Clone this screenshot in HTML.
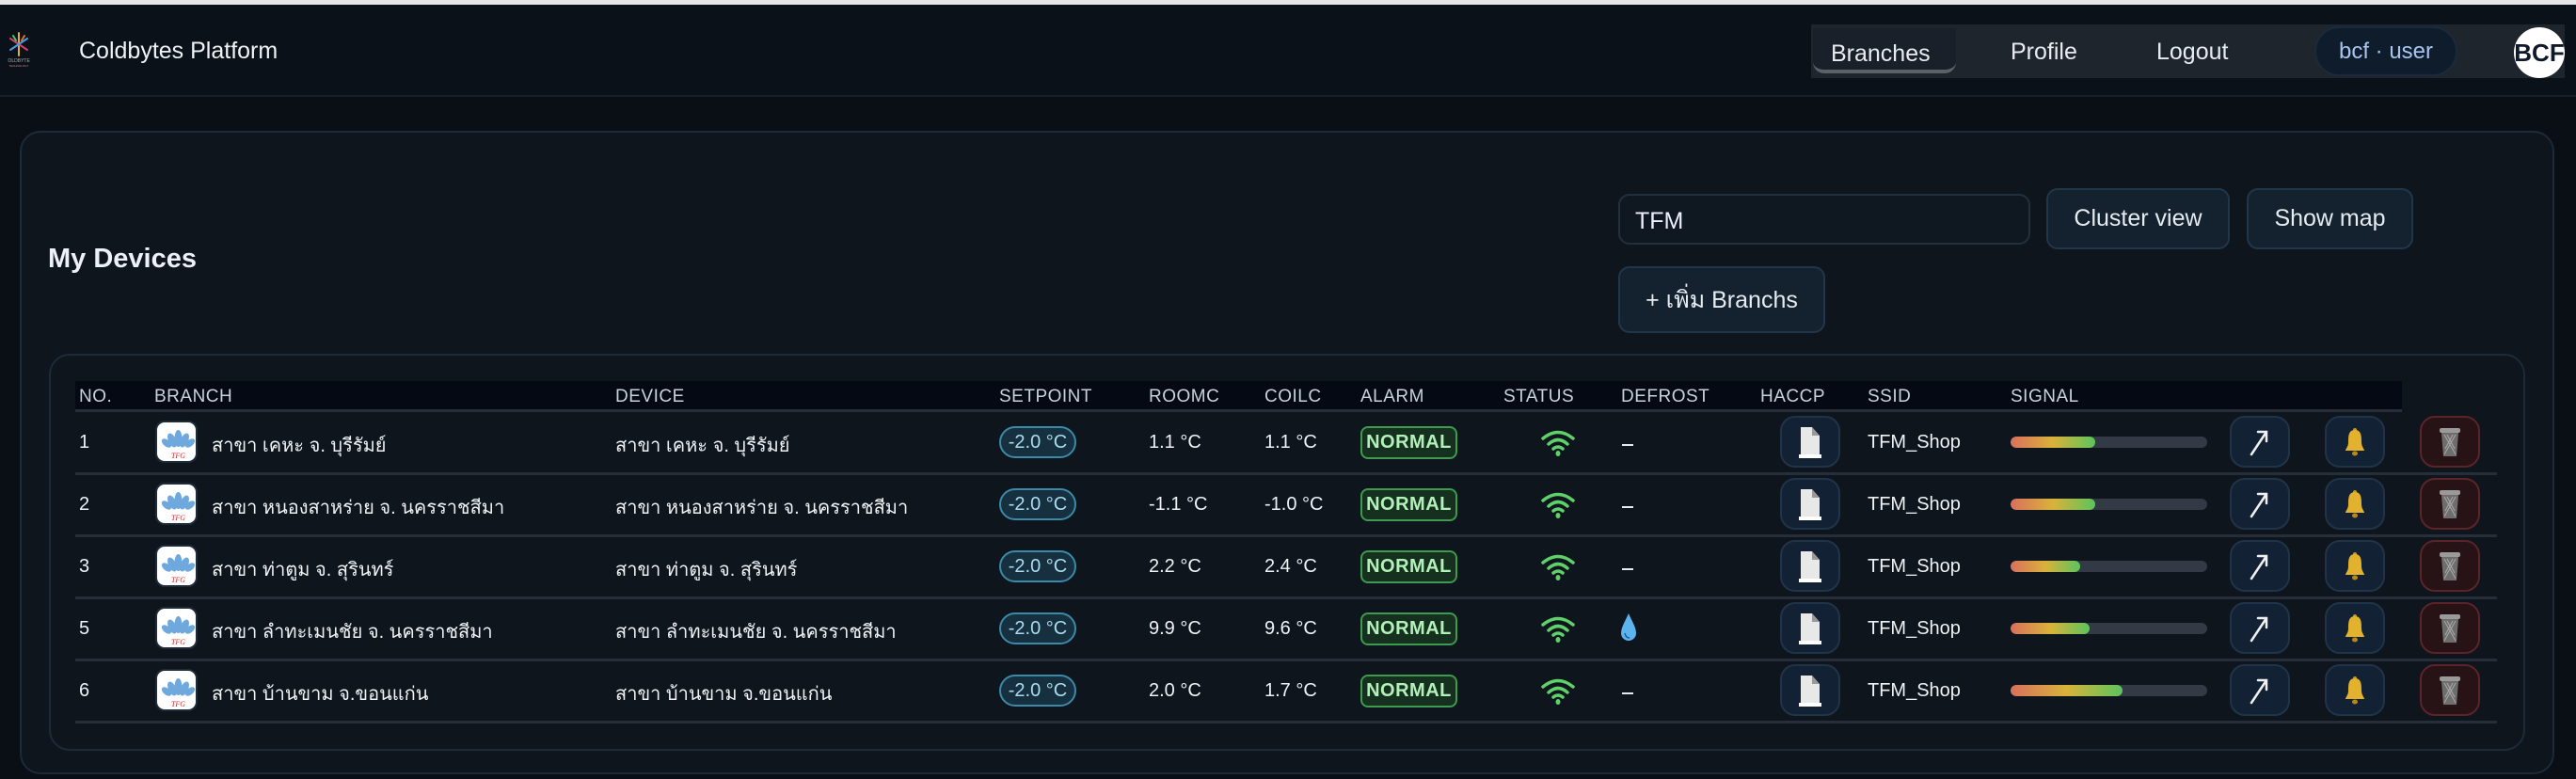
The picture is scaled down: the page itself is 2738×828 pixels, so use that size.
<!DOCTYPE html>
<html><head><meta charset="utf-8">
<style>
*{box-sizing:border-box;margin:0;padding:0}
body{width:2738px;height:828px;background:#0a0f15;font-family:"Liberation Sans","DejaVu Sans",sans-serif;color:#e6ebf0;position:relative;overflow:hidden}
.a{position:absolute}
.top{left:0;top:0;width:2738px;height:5px;background:#e4e6e8}
.nav{left:0;top:5px;width:2738px;height:98px;background:#0b1118;border-bottom:2px solid #17212c}
.ng{left:1925px;top:26px;width:801px;height:57px;background:#1f252d}
.nt{font-size:25px;color:#e8ecf0;top:41px}
.card{left:21px;top:139px;width:2694px;height:684px;border:2px solid #1c2a39;border-radius:22px;background:#0f151c}
.tbl{left:52px;top:376px;width:2632px;height:422px;border:2px solid #1c2a39;border-radius:22px;background:#0f151c}
.btn{background:#14222f;border:2px solid #22364a;border-radius:12px;color:#e6ebf0;font-size:25px;display:flex;align-items:center;justify-content:center}
.hd{left:80px;top:405px;width:2473px;height:31px;background:#040913}
.ht{top:411px;font-size:19px;color:#c9d1db;letter-spacing:.5px}
.line{left:80px;width:2574px;height:3px;background:#262f39}
.t{font-size:20px;color:#eef2f5}
.logo{width:45px;height:45px;border-radius:10px;background:#fff;border:2px solid #1f2b38;overflow:hidden}
.sp{width:82px;height:34px;border:2px solid #3a8aa8;background:#163040;border-radius:17px;color:#a9dcee;font-size:20px;display:flex;align-items:center;justify-content:center}
.nm{width:103px;height:35px;border:2px solid #3e9a4e;background:#16301f;border-radius:8px;color:#b2f2b8;font-size:20px;font-weight:bold;display:flex;align-items:center;justify-content:center;letter-spacing:.5px}
.ib{width:64px;height:55px;border:2px solid #203449;background:#122133;border-radius:16px;display:flex;align-items:center;justify-content:center}
.tr{border-color:#5a2428;background:#271216}
.bar{width:209px;height:12px;border-radius:6px;background:#333a45;overflow:hidden}
.fill{height:12px;border-radius:6px;background:linear-gradient(90deg,#d9705d,#d9b23a 50%,#5cc45c)}
</style></head><body>
<div class="a top"></div>
<div class="a nav"></div>
<svg class="a" style="left:8px;top:33px" width="24" height="40" viewBox="0 0 24 40">
<g stroke-width="2" stroke-linecap="round"><line x1="12" y1="2" x2="12" y2="26" stroke="#e0b030"/><line x1="3" y1="8" x2="21" y2="20" stroke="#d04070"/><line x1="21" y1="8" x2="3" y2="20" stroke="#40a0e0"/><line x1="6" y1="5" x2="9" y2="10" stroke="#50c060"/><line x1="18" y1="5" x2="15" y2="10" stroke="#e07030"/></g>
<text x="12" y="33" font-size="5" fill="#aaa" text-anchor="middle" font-family="Liberation Sans">COLDBYTES</text>
<text x="12" y="38" font-size="3" fill="#c88" text-anchor="middle" font-family="Liberation Sans">TECHNOLOGY</text></svg>
<div class="a" style="left:84px;top:40px;font-size:25px;color:#f0f3f6">Coldbytes Platform</div>
<div class="a ng"></div>
<div class="a" style="left:1927px;top:30px;width:152px;height:48px;border-bottom:4px solid #5d6269;border-radius:0 0 12px 12px;background:#1a2029"></div>
<div class="a nt" style="left:1946px;top:43px">Branches</div>
<div class="a nt" style="left:2137px">Profile</div>
<div class="a nt" style="left:2292px">Logout</div>
<div class="a" style="left:2460px;top:28px;width:152px;height:53px;border-radius:27px;background:#0f1c2b;border:2px solid #1a2a3c;color:#a9c4f0;font-size:24px;display:flex;align-items:center;justify-content:center">bcf · user</div>
<div class="a" style="left:2672px;top:29px;width:54px;height:54px;border-radius:50%;background:#fff;color:#0e1a2a;font-weight:bold;font-size:26px;display:flex;align-items:center;justify-content:center;overflow:hidden">BCF</div>

<div class="a card"></div>
<div class="a" style="left:51px;top:259px;font-size:29px;font-weight:bold;color:#eef0f7">My Devices</div>
<div class="a" style="left:1720px;top:206px;width:438px;height:54px;border:2px solid #22303e;border-radius:12px;background:#0f1821;color:#eef;font-size:25px;padding:13px 0 0 16px">TFM</div>
<div class="a btn" style="left:2175px;top:200px;width:195px;height:65px">Cluster view</div>
<div class="a btn" style="left:2388px;top:200px;width:177px;height:65px">Show map</div>
<div class="a btn" style="left:1720px;top:283px;width:220px;height:71px">+ เพิ่ม Branchs</div>

<div class="a tbl"></div>
<div class="a hd"></div>
<div class="a ht" style="left:84px">NO.</div>
<div class="a ht" style="left:164px">BRANCH</div>
<div class="a ht" style="left:654px">DEVICE</div>
<div class="a ht" style="left:1062px">SETPOINT</div>
<div class="a ht" style="left:1221px">ROOMC</div>
<div class="a ht" style="left:1344px">COILC</div>
<div class="a ht" style="left:1446px">ALARM</div>
<div class="a ht" style="left:1598px">STATUS</div>
<div class="a ht" style="left:1723px">DEFROST</div>
<div class="a ht" style="left:1871px">HACCP</div>
<div class="a ht" style="left:1985px">SSID</div>
<div class="a ht" style="left:2137px">SIGNAL</div>
<div class="a line" style="top:435px;width:2473px"></div>

<div id="rows"></div>
<script>
var d=[["1","สาขา เคหะ จ. บุรีรัมย์","1.1 °C","1.1 °C",90,0],
["2","สาขา หนองสาหร่าย จ. นครราชสีมา","-1.1 °C","-1.0 °C",90,0],
["3","สาขา ท่าตูม จ. สุรินทร์","2.2 °C","2.4 °C",74,0],
["5","สาขา ลำทะเมนชัย จ. นครราชสีมา","9.9 °C","9.6 °C",84,1],
["6","สาขา บ้านขาม จ.ขอนแก่น","2.0 °C","1.7 °C",119,0]];
var h="";
d.forEach(function(r,i){var c=470+i*66;
h+='<div class="a t" style="left:84px;top:'+(c-11)+'px">'+r[0]+'</div>';
h+='<div class="a logo" style="left:165px;top:'+(c-23)+'px"><svg width="45" height="45" viewBox="0 0 45 45"><g fill="#6fa8dc"><ellipse cx="22.5" cy="17" rx="4" ry="9"/><ellipse cx="16" cy="19" rx="4" ry="8" transform="rotate(-25 16 19)"/><ellipse cx="29" cy="19" rx="4" ry="8" transform="rotate(25 29 19)"/><ellipse cx="10" cy="22" rx="3.5" ry="6" transform="rotate(-50 10 22)"/><ellipse cx="35" cy="22" rx="3.5" ry="6" transform="rotate(50 35 22)"/></g><text x="22.5" y="38" font-size="8" fill="#d22" font-style="italic" text-anchor="middle" font-family="Liberation Serif">TFG</text></svg></div>';
h+='<div class="a t" style="left:225px;top:'+(c-13)+'px">'+r[1]+'</div>';
h+='<div class="a t" style="left:654px;top:'+(c-13)+'px">'+r[1]+'</div>';
h+='<div class="a sp" style="left:1062px;top:'+(c-17)+'px">-2.0 °C</div>';
h+='<div class="a t" style="left:1221px;top:'+(c-11)+'px">'+r[2]+'</div>';
h+='<div class="a t" style="left:1344px;top:'+(c-11)+'px">'+r[3]+'</div>';
h+='<div class="a nm" style="left:1446px;top:'+(c-17)+'px">NORMAL</div>';
h+='<svg class="a" style="left:1636px;top:'+(c-13)+'px" width="40" height="28" viewBox="0 0 40 28"><g fill="none" stroke="#5fd06a" stroke-width="3.5" stroke-linecap="round"><path d="M4 9 Q20 -4 36 9"/><path d="M10 15 Q20 6 30 15"/><path d="M15 20 Q20 16 25 20"/></g><ellipse cx="20" cy="25" rx="2.5" ry="3" fill="#5fd06a"/></svg>';
if(r[5])h+='<svg class="a" style="left:1721px;top:'+(c-17)+'px" width="20" height="32" viewBox="0 0 20 32"><path d="M10 1 C6 10 2 16 2 22 a8 8 0 0 0 16 0 C18 16 14 10 10 1Z" fill="#5bb4ee"/><path d="M6 22 q1 5 5 5" stroke="#1d5c8a" stroke-width="1.5" fill="none"/></svg>';
else h+='<div class="a" style="left:1724px;top:'+(c+2)+'px;width:12px;height:2px;background:#e6ebf0"></div>';
h+='<div class="a ib" style="left:1892px;top:'+(c-28)+'px"><svg width="28" height="34" viewBox="0 0 28 34"><path d="M4 1 H16 L24 10 V33 H4Z" fill="#e8e8e8"/><path d="M16 1 V10 H24" fill="#999"/><rect x="2" y="30" width="24" height="4" fill="#fff"/></svg></div>';
h+='<div class="a t" style="left:1985px;top:'+(c-11)+'px">TFM_Shop</div>';
h+='<div class="a bar" style="left:2137px;top:'+(c-6)+'px"><div class="fill" style="width:'+r[4]+'px"></div></div>';
h+='<div class="a ib" style="left:2370px;top:'+(c-28)+'px"><svg width="26" height="30" viewBox="0 0 26 30"><path d="M4 28 L20 4 M11 4 H20 V14" stroke="#f0f0f0" stroke-width="2.5" fill="none" stroke-linecap="round"/></svg></div>';
h+='<div class="a ib" style="left:2471px;top:'+(c-28)+'px"><svg width="26" height="32" viewBox="0 0 26 32"><circle cx="13" cy="3" r="2" fill="#c8961e"/><path d="M13 3 C6 3 6 10 6 16 C6 21 3 23 3 25 H23 C23 23 20 21 20 16 C20 10 20 3 13 3Z" fill="#e2b22e"/><ellipse cx="13" cy="28" rx="3" ry="2.5" fill="#b8861a"/></svg></div>';
h+='<div class="a ib tr" style="left:2572px;top:'+(c-28)+'px"><svg width="26" height="34" viewBox="0 0 26 34"><rect x="2" y="2" width="22" height="5" rx="2" fill="#9a9a9a"/><path d="M4 7 H22 L20 32 H6Z" fill="#6e6e6e"/><path d="M7 9 L19 30 M19 9 L7 30 M10 9 L18 24 M16 9 L8 24" stroke="#aaa" stroke-width="1"/></svg></div>';
h+='<div class="a line" style="top:'+(c+32)+'px"></div>';
});
document.getElementById("rows").innerHTML=h;
</script>
</body></html>
